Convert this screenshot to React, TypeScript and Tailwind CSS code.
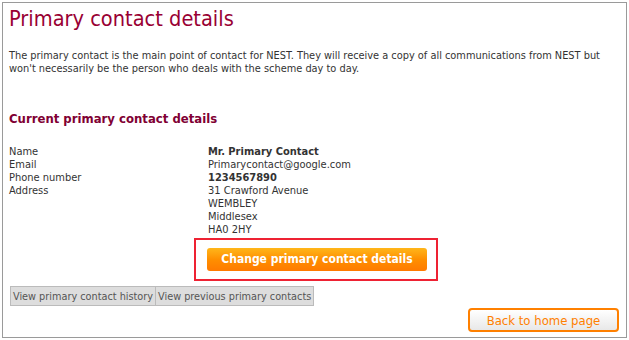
import React from 'react';

const font = { fontFamily: '"DejaVu Sans Condensed", "DejaVu Sans", sans-serif' };

const rows: { label: string; value: React.ReactNode; bold?: boolean }[] = [
  { label: 'Name', value: 'Mr. Primary Contact', bold: true },
  { label: 'Email', value: 'Primarycontact@google.com' },
  { label: 'Phone number', value: '1234567890', bold: true },
  {
    label: 'Address',
    value: (
      <>
        31 Crawford Avenue<br />WEMBLEY<br />Middlesex<br />HA0 2HY
      </>
    ),
  },
];

export default function App() {
  return (
    <div className="w-[629px] h-[340px] bg-white p-[2px]" style={font}>
      <div className="h-full border border-[#9a9a9a] px-[6px] pt-[2px] text-[#333] text-[11px] leading-[13px]">
        <h1 className="text-[21.6px] leading-[28px] text-[#990033]">Primary contact details</h1>

        <p className="mt-[16px] w-[600px] text-[10.9px] leading-[13px]">
          The primary contact is the main point of contact for NEST. They will receive a copy of all communications from NEST but
          won't necessarily be the person who deals with the scheme day to day.
        </p>

        <h2 className="mt-[35px] text-[13px] leading-[17px] font-bold text-[#800033]">Current primary contact details</h2>

        <div className="mt-[18px] flex flex-col">
          {rows.map((r) => (
            <div key={r.label} className="flex">
              <div className="w-[199px]">{r.label}</div>
              <div className={r.bold ? 'font-bold' : ''}>{r.value}</div>
            </div>
          ))}
        </div>

        <div className="mt-[2px] ml-[185px] w-[244px] border-2 border-[#ee2233] px-[11px] pt-[8px] pb-[8px]">
          <button className="w-[220px] h-[23px] rounded-[3px] bg-gradient-to-b from-[#ffb619] via-[#ff8f00] to-[#ff7a00] text-white font-bold text-[12px] leading-[23px]">
            Change primary contact details
          </button>
        </div>

        <div className="mt-[5px] ml-[1px] flex">
          <button className="h-[20px] px-[2px] bg-[#dddddd] border border-[#bbbbbb] text-[#555] text-[10.8px]">View primary contact history</button>
          <button className="h-[20px] px-[2px] bg-[#dddddd] border border-[#bbbbbb] border-l-0 text-[#555] text-[10.8px]">View previous primary contacts</button>
        </div>

        <div className="mt-[2px] flex justify-end mr-[1px]">
          <button className="w-[151px] h-[24px] rounded-[4px] border-2 border-[#ff8000] bg-gradient-to-b from-white to-[#e8e8e8] text-[#ff8000] text-[13px]">
            Back to home page
          </button>
        </div>
      </div>
    </div>
  );
}
